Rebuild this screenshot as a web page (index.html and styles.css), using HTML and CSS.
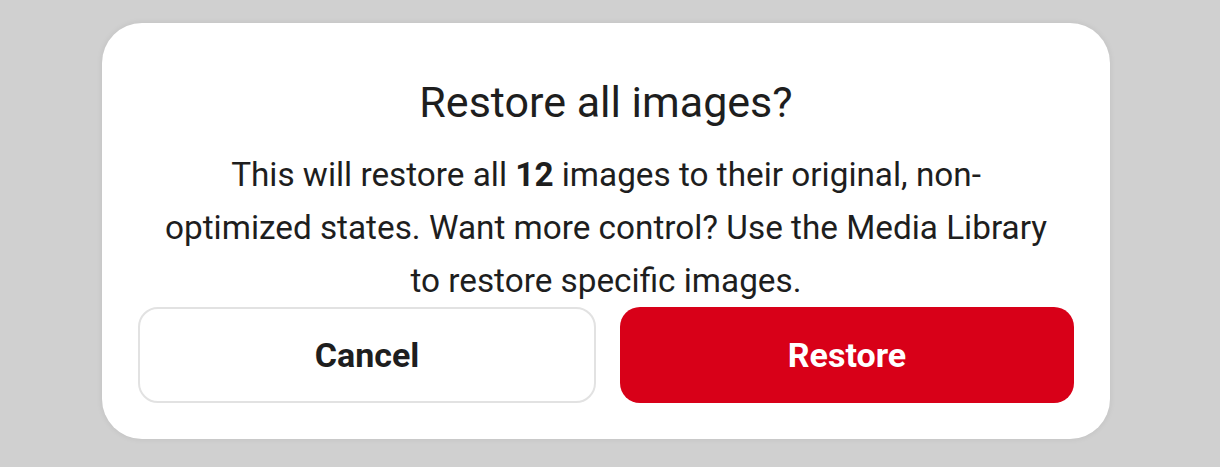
FILE: index.html
```html
<!DOCTYPE html>
<html lang="en">
<head>
  <meta charset="UTF-8" />
  <title>Restore all images</title>
  <link rel="stylesheet" href="styles.css">
</head>
<body>
  <div class="dialog">
    <h2 class="dialog-title">Restore all images?</h2>
    <p class="dialog-text">This will restore all <strong>12</strong> images to their original, non-optimized states. Want more control? Use the Media Library to restore specific images.</p>
    <div class="dialog-actions">
      <button class="btn btn-cancel">Cancel</button>
      <button class="btn btn-restore">Restore</button>
    </div>
  </div>
</body>
</html>
```

FILE: styles.css
```css
* {
  box-sizing: border-box;
}

body {
  margin: 0;
  padding: 23px 110px 28px 102px;
  background: #d0d0d0;
  font-family: Roboto, sans-serif;
  color: #1e1e1e;
}

.dialog {
  background: #ffffff;
  border-radius: 40px;
  box-shadow: 0 0 6px rgba(0,0,0,0.08);
  padding: 54px 36px 36px;
  text-align: center;
}

.dialog-title {
  margin: 0 0 21px;
  font-size: 43px;
  line-height: 50px;
  font-weight: 400;
}

.dialog-text {
  max-width: 891px;
  margin: 0 auto;
  font-size: 33.3px;
  line-height: 53px;
}

.dialog-text strong {
  font-weight: 700;
}

.dialog-actions {
  display: flex;
  gap: 24px;
}

.btn {
  flex: 1;
  height: 96px;
  border-radius: 20px;
  font-family: Roboto, sans-serif;
  font-size: 34px;
  font-weight: 700;
  cursor: pointer;
}

.btn-cancel {
  background: #ffffff;
  border: 2px solid #e2e2e2;
  color: #1e1e1e;
}

.btn-restore {
  background: #d80018;
  border: none;
  color: #ffffff;
}
```
